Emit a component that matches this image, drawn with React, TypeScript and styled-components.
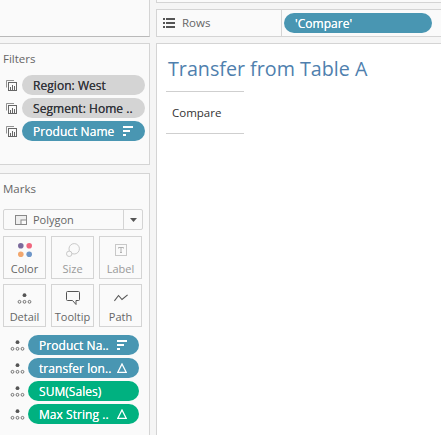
import React from "react";
import styled, { createGlobalStyle } from "styled-components";

const Global = createGlobalStyle`
  html, body { margin: 0; padding: 0; background: #f5f5f5; }
  body { font-family: "Open Sans", "Noto Sans", sans-serif; overflow: hidden; }
`;

const Page = styled.div`
  width: 441px;
  height: 435px;
  display: grid;
  grid-template-columns: 150px 1fr;
  column-gap: 6px;
  overflow: hidden;
`;

const Column = styled.div`
  display: flex;
  flex-direction: column;
  min-width: 0;
`;

const Panel = styled.section<{ $height?: number; $gap?: number; $open?: boolean }>`
  box-sizing: border-box;
  background: #fafafa;
  border: 1px solid #d4d4d4;
  border-left: none;
  ${(p) => (p.$open ? "border-bottom: none;" : "")}
  ${(p) => (p.$height ? `height: ${p.$height}px;` : "flex: 1;")}
  margin-bottom: ${(p) => p.$gap ?? 0}px;
`;

const TopPanel = styled(Panel)`
  border-top: none;
  border-bottom-color: #b9b9b9;
`;

const SectionTitle = styled.div`
  font-size: 11.5px;
  line-height: 16px;
  color: #666;
  padding: 7px 0 0 3px;
`;

const FilterList = styled.div`
  display: flex;
  flex-direction: column;
  gap: 3px;
  margin-top: 8px;
  padding: 0 4px 0 6px;
`;

const FilterRow = styled.div`
  display: flex;
  align-items: center;
  gap: 5px;
`;

const Pill = styled.div<{ $tone: "grey" | "blue" | "green" }>`
  box-sizing: border-box;
  flex: 1;
  min-width: 0;
  height: 20px;
  border-radius: 10px;
  padding: 0 12px 0 11px;
  display: flex;
  align-items: center;
  justify-content: space-between;
  font-size: 12px;
  font-weight: 500;
  letter-spacing: 0.05px;
  text-shadow: 0 0 0.5px currentColor;
  white-space: nowrap;
  color: ${(p) => (p.$tone === "grey" ? "#33353a" : "#fff")};
  background: ${(p) =>
    p.$tone === "grey" ? "#d4d4d4" : p.$tone === "blue" ? "#4996b2" : "#00b180"};
`;

const MarkSelect = styled.div`
  box-sizing: border-box;
  height: 21px;
  width: 140px;
  margin: 12px 0 0 3px;
  display: flex;
  background: #fafafa;
  border: 1px solid #d4d4d4;
  border-radius: 2px;
`;

const MarkValue = styled.div`
  flex: 1;
  display: flex;
  align-items: center;
  gap: 6px;
  padding-left: 11px;
  font-size: 11px;
  color: #666;
`;

const MarkArrow = styled.div`
  width: 18px;
  border-left: 1px solid #d4d4d4;
  display: flex;
  align-items: center;
  justify-content: center;
`;

const MarkGrid = styled.div`
  display: grid;
  grid-template-columns: repeat(3, 43px);
  grid-auto-rows: 43px;
  column-gap: 5px;
  row-gap: 5px;
  margin: 6px 0 0 3px;
`;

const MarkButton = styled.div<{ $muted?: boolean }>`
  box-sizing: border-box;
  border: 1px solid #d4d4d4;
  display: flex;
  flex-direction: column;
  align-items: center;
  justify-content: space-between;
  padding: 3px 0 2px;
  font-size: 11px;
  line-height: 15px;
  color: ${(p) => (p.$muted ? "#999" : "#666")};
`;

const IconSlot = styled.div`
  height: 20px;
  display: flex;
  align-items: center;
  justify-content: center;
`;

const FieldList = styled.div`
  display: flex;
  flex-direction: column;
  gap: 3px;
  margin-top: 8px;
  padding: 0 10px 0 10px;
`;

const FieldRow = styled.div`
  display: flex;
  align-items: center;
  gap: 3px;
`;

const Shelf = styled.div`
  box-sizing: border-box;
  margin-top: 9px;
  margin-bottom: 6px;
  height: 28px;
  background: #fafafa;
  border: 1px solid #d4d4d4;
  border-right: none;
  display: flex;
`;

const TopShelf = styled.div`
  height: 3px;
  box-sizing: border-box;
  background: #fafafa;
  border: 1px solid #d4d4d4;
  border-top: none;
  border-right: none;
  margin-bottom: -3px;
`;

const ShelfLabel = styled.div`
  box-sizing: border-box;
  width: 125px;
  border-right: 1px solid #d4d4d4;
  display: flex;
  align-items: center;
  gap: 7px;
  padding-left: 6px;
  padding-bottom: 1px;
  font-size: 11.5px;
  color: #666;
`;

const ShelfPills = styled.div`
  width: 148px;
  margin: 3px 0 0 2px;
  display: flex;
`;

const View = styled.main`
  flex: 1;
  box-sizing: border-box;
  background: #fff;
  border-top: 1px solid #d4d4d4;
  border-left: 1px solid #d4d4d4;
  padding: 14px 0 0 9px;
`;

const Title = styled.h1`
  margin: 0 0 0 2px;
  font-size: 19.7px;
  line-height: 22px;
  font-weight: 500;
  color: #4f7fae;
`;

const HeaderCell = styled.div`
  box-sizing: border-box;
  width: 78px;
  height: 43px;
  margin-top: 11px;
  border-top: 1px solid #cfcfcf;
  border-bottom: 1px solid #cfcfcf;
  padding-left: 6px;
  display: flex;
  align-items: center;
  font-size: 11.5px;
  color: #333;
`;

const Sort = ({ c = "#fff" }: { c?: string }) => (
  <svg width="10" height="10" viewBox="0 0 10 10">
    <path d="M0 0h10v2H0zM0 4h7v2H0zM0 8h3v2H0z" fill={c} />
  </svg>
);

const Delta = () => (
  <svg width="10" height="10" viewBox="0 0 10 10">
    <path d="M5 1 9.2 9.3H.8Z" fill="none" stroke="#fff" strokeWidth="1.3" />
  </svg>
);

const FilterIcon = () => (
  <svg width="11" height="11" viewBox="0 0 11 11" fill="none" stroke="#666">
    <path d="M.5 7.5V.5H8" opacity=".7" />
    <rect x="2.5" y="2.5" width="8" height="8" />
    <path d="M4.5 10V7M6.5 10V5M8.5 10V6" />
  </svg>
);

const DetailIcon = ({ c = "#555" }: { c?: string }) => (
  <svg width="15" height="11" viewBox="0 0 15 11">
    <circle cx="7.5" cy="2.2" r="1.9" fill={c} />
    <g fill="none" stroke={c} strokeWidth=".8">
      <circle cx="2.5" cy="8.8" r="1.4" />
      <circle cx="7.5" cy="8.8" r="1.4" />
      <circle cx="12.5" cy="8.8" r="1.4" />
    </g>
  </svg>
);

const ColorIcon = () => (
  <svg width="14" height="14" viewBox="0 0 14 14">
    <circle cx="2.8" cy="2.8" r="2.8" fill="#7b6a9c" />
    <circle cx="11.2" cy="2.8" r="2.8" fill="#f0667e" />
    <circle cx="2.8" cy="11.2" r="2.8" fill="#f2a76e" />
    <circle cx="11.2" cy="11.2" r="2.8" fill="#6e96c8" />
  </svg>
);

const SizeIcon = () => (
  <svg width="14" height="14" viewBox="0 0 14 14" fill="none" stroke="#c8c8c8">
    <circle cx="8.2" cy="5.8" r="5.2" />
    <circle cx="3.2" cy="10.8" r="2.7" fill="#fafafa" />
  </svg>
);

const LabelIcon = () => (
  <svg width="12" height="12" viewBox="0 0 12 12" fill="none">
    <rect x=".5" y=".5" width="11" height="11" stroke="#c8c8c8" />
    <path d="M3.5 4.5V3.5h5v1M6 3.5v5M5 8.5h2" stroke="#aaa" strokeWidth=".9" />
  </svg>
);

const TooltipIcon = () => (
  <svg width="14" height="14" viewBox="0 0 14 14" fill="none" stroke="#555">
    <path d="M1.5.5h11a1 1 0 0 1 1 1v7a1 1 0 0 1-1 1h-2.5v4l-3.5-4H1.5a1 1 0 0 1-1-1v-7a1 1 0 0 1 1-1z" />
  </svg>
);

const PathIcon = () => (
  <svg width="14" height="8" viewBox="0 0 14 8" fill="none" stroke="#555" strokeWidth="1.1">
    <path d="M.4 6.8 4.5 1.5l3.5 4L13.6.8" />
  </svg>
);

const PolygonIcon = () => (
  <svg width="12" height="10" viewBox="0 0 12 10" fill="none" stroke="#888">
    <rect x=".5" y=".5" width="11" height="9" fill="#eee" />
    <rect x="6" y="5" width="5.5" height="4.5" fill="#fafafa" />
  </svg>
);

const Caret = () => (
  <svg width="7" height="4" viewBox="0 0 7 4">
    <path d="M0 0h7L3.5 4z" fill="#555" />
  </svg>
);

const RowsIcon = () => (
  <svg width="12" height="10" viewBox="0 0 12 10" fill="#555">
    <path d="M0 0h2v2H0zM3 0h9v2H3zM0 4h2v2H0zM3 4h9v2H3zM0 8h2v2H0zM3 8h9v2H3z" />
  </svg>
);

const filters = [
  { text: "Region: West", tone: "grey" as const },
  { text: "Segment: Home ..", tone: "grey" as const },
  { text: "Product Name", tone: "blue" as const, sort: true },
];

const buttons = [
  { label: "Color", icon: <ColorIcon /> },
  { label: "Size", icon: <SizeIcon />, muted: true },
  { label: "Label", icon: <LabelIcon />, muted: true },
  { label: "Detail", icon: <DetailIcon /> },
  { label: "Tooltip", icon: <TooltipIcon /> },
  { label: "Path", icon: <PathIcon /> },
];

const fields = [
  { text: "Product Na..", tone: "blue" as const, mark: <Sort /> },
  { text: "transfer lon..", tone: "blue" as const, mark: <Delta /> },
  { text: "SUM(Sales)", tone: "green" as const },
  { text: "Max String ..", tone: "green" as const, mark: <Delta /> },
];

export default function App() {
  return (
    <Page>
      <Global />
      <Column>
        <TopPanel $height={37} $gap={6} />
        <Panel $height={122} $gap={8}>
          <SectionTitle>Filters</SectionTitle>
          <FilterList>
            {filters.map((f) => (
              <FilterRow key={f.text}>
                <FilterIcon />
                <Pill $tone={f.tone}>
                  {f.text}
                  {f.sort && <Sort />}
                </Pill>
              </FilterRow>
            ))}
          </FilterList>
        </Panel>
        <Panel $open>
          <SectionTitle>Marks</SectionTitle>
          <MarkSelect>
            <MarkValue>
              <PolygonIcon />
              Polygon
            </MarkValue>
            <MarkArrow>
              <Caret />
            </MarkArrow>
          </MarkSelect>
          <MarkGrid>
            {buttons.map((b) => (
              <MarkButton key={b.label} $muted={b.muted}>
                <IconSlot>{b.icon}</IconSlot>
                {b.label}
              </MarkButton>
            ))}
          </MarkGrid>
          <FieldList>
            {fields.map((f) => (
              <FieldRow key={f.text}>
                <DetailIcon />
                <Pill $tone={f.tone}>
                  {f.text}
                  {f.mark}
                </Pill>
              </FieldRow>
            ))}
          </FieldList>
        </Panel>
      </Column>
      <Column>
        <TopShelf />
        <Shelf>
          <ShelfLabel>
            <RowsIcon />
            Rows
          </ShelfLabel>
          <ShelfPills>
            <Pill $tone="blue">'Compare'</Pill>
          </ShelfPills>
        </Shelf>
        <View>
          <Title>Transfer from Table A</Title>
          <HeaderCell>Compare</HeaderCell>
        </View>
      </Column>
    </Page>
  );
}
